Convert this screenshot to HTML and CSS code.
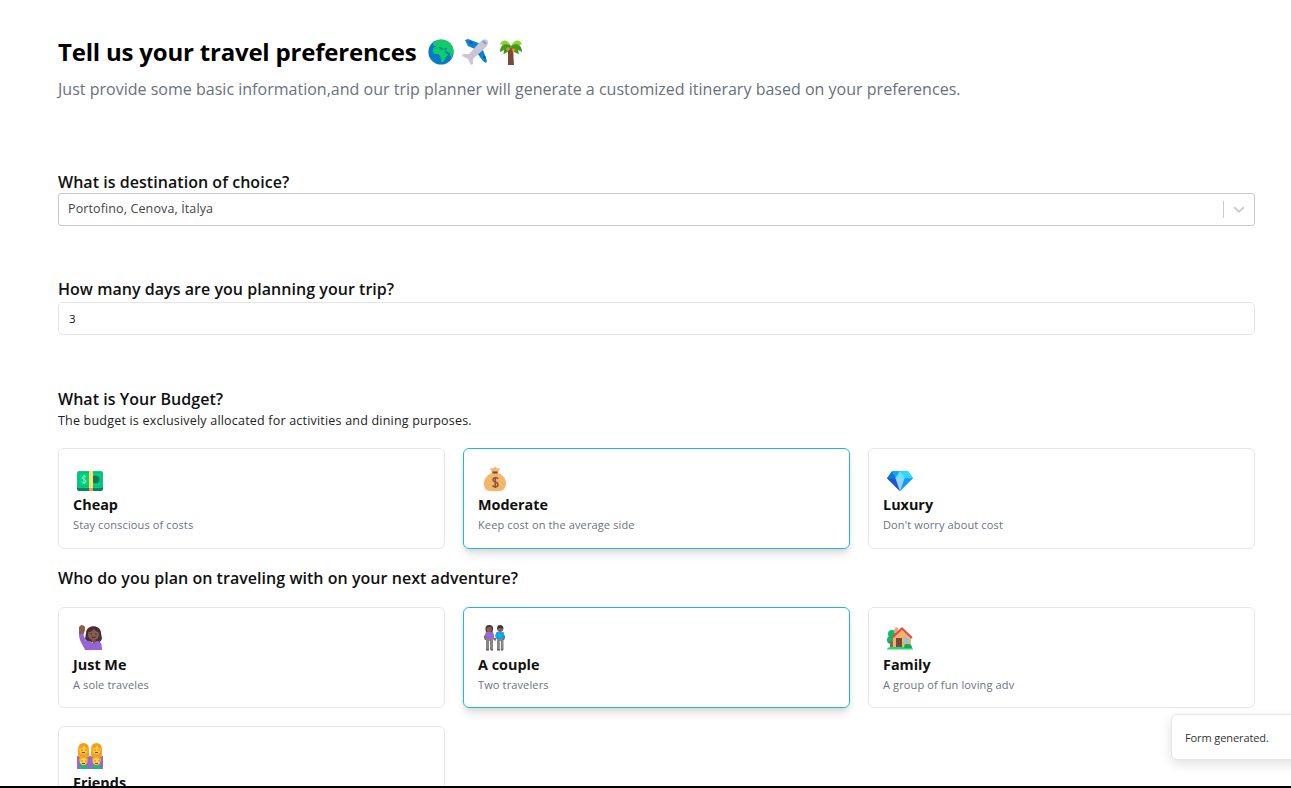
FILE: index.html
```html
<!DOCTYPE html>
<html lang="en">
<head>
<meta charset="utf-8">
<title>Travel preferences</title>
<link rel="stylesheet" href="styles.css">
</head>
<body>
<main class="page">
  <header class="header">
    <h1 class="title"><span class="title-text">Tell us your travel preferences</span>
      <svg class="emoji" viewBox="0 0 26 26"><circle cx="13" cy="13" r="12.6" fill="#0878c8"/><path d="M5 4C8 1 12 0 16 1c5 1 9 5 9.500 10 0 3-1 6-2 8l-2-5-2-1-3-2 2 4 2 0-3 4-2 4-2 0-1-5-2-3-4 0-2-3 1-3 3-2-3 0z" fill="#10cb66"/><path d="M10 8l3 0 2 2 4-1 0 1.500-6 0z" fill="#0878c8"/></svg>
      <svg class="emoji" viewBox="0 0 26 26"><path d="M2 1l3-1 13 5-4 6-9-4zM20 11l4 11-1 2-3-2-6-8z" fill="#0b83d2"/><path d="M6 3l2-1 2 2-2 1zm15 13 2 2-1 2-2-2z" fill="#075da8"/><path d="M24 1c-3-2-6 1-8 3L6 15l-6 0-1 2 6 3 3 6 2-1 0-5L22 9c3-3 4-6 2-8z" fill="#cdc4d6"/><path d="M20 2l3 3" stroke="#5cacdf" stroke-width="2"/></svg>
      <svg class="emoji" viewBox="0 0 26 26"><path d="M10 9h5l1 17h-6z" fill="#7b4939"/><path d="M13 8C11 1 5-1 2 5l5 2 6 2 7-2 4-2C21-1 15 1 13 8z" fill="#86d72f"/><path d="M13 7C7 3 2 6 2 13l4-2-.5 4C9 14 12 12 13 8c1 4 4 6 8 7l-1-4 4 2c0-7-5-10-11-6z" fill="#44981e"/><circle cx="10" cy="10" r="1.8" fill="#ed8733"/><circle cx="15.500" cy="11" r="1.8" fill="#ed8733"/></svg>
    </h1>
    <p class="subtitle">Just provide some basic information,and our trip planner will generate a customized itinerary based on your preferences.</p>
  </header>
  <section class="field destination">
    <h2 class="label">What is destination of choice?</h2>
    <div class="select"><span class="value">Portofino, Cenova, İtalya</span><span class="divider"></span><svg class="chevron" viewBox="0 0 12 8"><path d="M1.7 1.7 6 5.8l4.3-4.1" fill="none" stroke="#ccc" stroke-width="1.9" stroke-linecap="round"/></svg></div>
  </section>
  <section class="field days">
    <h2 class="label">How many days are you planning your trip?</h2>
    <div class="input">3</div>
  </section>
  <section class="budget">
    <h2 class="label">What is Your Budget?</h2>
    <p class="note">The budget is exclusively allocated for activities and dining purposes.</p>
    <div class="grid">
      <article class="card">
        <svg class="icon" viewBox="0 0 26 26"><rect y="7" width="26" height="17" rx="2" fill="#09835f"/><rect y="4" width="26" height="17" rx="2" fill="#07cf83"/><rect x="1.7" y="5.7" width="22.6" height="13.5" rx="1" fill="none" stroke="#06ad70" stroke-width=".8"/><circle cx="18.5" cy="12.5" r="4" fill="#087c5b"/><path d="M12 4h4v17h-4z" fill="#ffe26b"/><path d="M12 21h4v3h-4z" fill="#ff9655"/><path d="M9 10c-1-1.500-4-1-4 .8 0 2.200 4 1.200 4 3.400 0 1.800-3 2.200-4.300.7M7 8v9" fill="none" stroke="#82f1b8" stroke-width="1"/></svg>
        <h3 class="name">Cheap</h3><p class="desc">Stay conscious of costs</p>
      </article>
      <article class="card selected">
        <svg class="icon" viewBox="0 0 26 26"><path d="M8 1l3 .5L13-.5l2 2 3-.5-2 5c5 2 8 6 8 10s-2 8-6 8H8c-5 0-6-4-6-8s3-8 8-10z" fill="#f3b76c"/><path d="M10.500 4.500h5v2h-5z" fill="#784538"/><path d="M16 12c-1-2-5-2-5 1 0 2.500 5 1.500 5 4.500 0 3-4 3-5.500 1M13.300 10v11" fill="none" stroke="#8b5139" stroke-width="1.500"/></svg>
        <h3 class="name">Moderate</h3><p class="desc">Keep cost on the average side</p>
      </article>
      <article class="card">
        <svg class="icon" viewBox="0 0 26 26"><g transform="translate(0 -.7)"><path d="M5 5h16l5 7-13 13L0 12z" fill="#119cf0"/><path d="M5 5l4 7H0z" fill="#087dd2"/><path d="M5 5h8l-4 7z" fill="#12a5ee"/><path d="M13 5h8l5 7h-9z" fill="#29d9ff"/><path d="M0 12h9l4 13z" fill="#2252d6"/><path d="M13 5l4.500 7L13 25 8.500 12z" fill="#95d2ff"/><path d="M8.500 12h9L13 5z" fill="#5ee5ff"/></g></svg>
        <h3 class="name">Luxury</h3><p class="desc">Don't worry about cost</p>
      </article>
    </div>
  </section>
  <section class="companions">
    <h2 class="label">Who do you plan on traveling with on your next adventure?</h2>
    <div class="grid">
      <article class="card">
        <svg class="icon" viewBox="0 0 26 26"><path d="M9 8c0-9 15-9 15 0l1 6-2 3H11l-3-3z" fill="#443039"/><path d="M2 10V2q3-4 6 0v3L6 11z" fill="#8b5c50"/><circle cx="16.500" cy="9.500" r="5.500" fill="#8b5c50"/><path d="M2 9h4l3 7h4l3 2 4-2c4 0 5 3 5 9H8C7 21 2 17 2 9z" fill="#9565d4"/><path d="M14 15h5l-2 4z" fill="#805146"/><path d="M11 7q5 0 6-4 1 4 5 4-1-5-6-5t-5 5" fill="#443039"/><path d="M13.500 9h1.500m3 0h1.500M14.500 12q2 1 4 0" stroke="#3d2526" fill="none"/></svg>
        <h3 class="name">Just Me</h3><p class="desc">A sole traveles</p>
      </article>
      <article class="card selected">
        <svg class="icon" viewBox="0 0 26 26"><rect x="3.500" y="0" width="7.500" height="8" rx="3.500" fill="#473038"/><circle cx="7.200" cy="4.500" r="2.700" fill="#8b5c50"/><path d="M4 13h7v12H8V16H7v9H4zm11 0h6.500v12h-2.700V16h-1v9H15z" fill="#858585"/><path d="M4 7h7l1 3v5l-1-1H4l-1-1-1-1z" fill="#9767d4"/><path d="M14.500 7h7l1.500 5-1 2h-7l-1-1-1-2z" fill="#08a9ee"/><path d="M2.500 11l1 4m8.500-2 1 2 1-2m8.500-2-1 4" stroke="#8b5c50" stroke-width="1.400" fill="none"/><circle cx="18.200" cy="4" r="3" fill="#8b5c50"/><path d="M15 4q0-4 3.200-4t3.300 4q-3-2-6.500 0" fill="#473038"/><path d="M4 25h3m2 0h2m4 0h3m1 0h2" stroke="#593c40"/></svg>
        <h3 class="name">A couple</h3><p class="desc">Two travelers</p>
      </article>
      <article class="card">
        <svg class="icon" viewBox="0 0 26 26"><circle cx="5" cy="9" r="4" fill="#12b86d"/><circle cx="4" cy="15" r="4" fill="#0dba69"/><path d="M3 16h3v8H3z" fill="#986347"/><path d="M7 5l2-3 2 1v5H7z" fill="#eba86a"/><path d="M6 12l9-8 9 8v12H6z" fill="#efb56e"/><path d="M5 13 15 3.500 25 13" fill="none" stroke="#ed4749" stroke-width="2"/><path d="M9 13h6v9H9z" fill="#7b473d"/><path d="M17 13h5v5h-5z" fill="#80c9f0"/><path d="M0 24.500q0-2.500 4-2.500h14q2-1 4 0 4 0 4 2.500z" fill="#1edb70"/><path d="M17 23q0-5 4-4 4 0 4 4z" fill="#14ac56"/></svg>
        <h3 class="name">Family</h3><p class="desc">A group of fun loving adv</p>
      </article>
      <article class="card friends">
        <svg class="icon" viewBox="0 0 26 26"><path d="M0 26V13h26v13z" fill="#9867d2"/><g id="pair"><path d="M1 14V7q0-7 5.500-7T12 7v7z" fill="#f6a123"/><circle cx="6.500" cy="7" r="4" fill="#ffcb3d"/><path d="M3 6q3-1 4-4 1 3 4 4l-1-4-6-1z" fill="#f49b1e"/><path d="M4.500 7h1m3 0h1M5 9.500h3" stroke="#704337" fill="none"/><circle cx="6.500" cy="17" r="4.500" fill="#f5a427"/><circle cx="6.500" cy="18.500" r="3.500" fill="#ffd346"/><path d="M4.500 18h1m3 0h1M5 20.500h3" stroke="#704337" fill="none"/><path d="M2 26q0-4 3-4l1.500 1 1.500-1q3 0 3 4z" fill="#17bd72"/></g><use href="#pair" x="13"/></svg>
        <h3 class="name">Friends</h3>
      </article>
    </div>
  </section>
</main>
<div class="toast">Form generated.</div>
<div class="bottom-line"></div>
</body>
</html>
```
FILE: styles.css
```css
* { box-sizing: border-box; }
html, body { margin: 0; height: 788px; overflow: hidden; background: #fff; }
body { font-family: "Open Sans", "Noto Sans", sans-serif; color: #111; }
h1, h2, h3, p { margin: 0; white-space: nowrap; }
.page { height: 788px; padding: 35px 36px 0 58px; overflow: hidden; }
.header { height: 137px; }
.title { display: flex; align-items: center; height: 34px; font-size: 24px; line-height: 34px; font-weight: 700; color: #000; }
.title-text { width: 370px; letter-spacing: -.2px; }
.emoji { width: 26px; height: 26px; flex: none; margin-right: 9px; overflow: visible; }
.subtitle { margin-top: 8px; line-height: 24px; font-size: 16px; letter-spacing: .015px; color: #69717d; }
.label { height: 21px; line-height: 20px; font-size: 16px; font-weight: 600; letter-spacing: .04px; }
.destination { height: 108px; }
.days { height: 109px; }
.select { display: flex; align-items: center; height: 33px; border: 1px solid #c8c8c8; border-radius: 3px; padding: 0 10px 0 9px; font-size: 12.5px; color: #444; }
.value { flex: 1; letter-spacing: .12px; position: relative; top: -1px; }
.divider { width: 1px; height: 17px; background: #ccc; margin-right: 9px; }
.chevron { width: 12px; height: 8px; margin-right: -1px; }
.days .label { line-height: 19px; }
.input { height: 33px; margin-top: 1px; border: 1px solid #e4e5e8; border-radius: 5px; padding: 0 10px; line-height: 31px; font-size: 11.5px; }
.budget { height: 179px; }
.note { height: 20px; line-height: 22px; font-size: 12.5px; letter-spacing: .2px; color: #222; }
.grid { display: grid; grid-template-columns: repeat(3, 387px); gap: 18px; }
.budget .grid { margin-top: 18px; }
.companions .grid { margin-top: 18px; }
.card { height: 101px; border: 1px solid #e5e7eb; border-radius: 6px; padding: 18px 14px; }
.selected { border-color: #22b8cf; box-shadow: 0 7px 10px -2px rgba(0,0,0,.12), 0 2px 4px rgba(0,0,0,.06); }
.icon { display: block; width: 26px; height: 26px; margin-left: 4px; overflow: visible; }
.name { height: 22px; line-height: 24px; font-size: 14.4px; font-weight: 700; }
.desc { height: 18px; line-height: 20px; font-size: 11px; letter-spacing: .13px; color: #6b7280; }
.companions .card { padding-top: 17px; }
.companions .name { height: 23px; line-height: 28px; }
.companions .desc { line-height: 22px; }
.companions .friends { padding-top: 16px; }
.toast { position: absolute; left: 1171px; top: 714px; width: 132px; height: 46px; border: 1px solid #e7e7e9; border-radius: 6px; background: #fff; padding-left: 13px; font-size: 11px; letter-spacing: -.1px; line-height: 45px; color: #333; white-space: nowrap; box-shadow: 0 4px 12px rgba(0,0,0,.12); }
.bottom-line { position: absolute; left: 0; top: 786px; width: 1291px; height: 2px; background: #000; }
```
